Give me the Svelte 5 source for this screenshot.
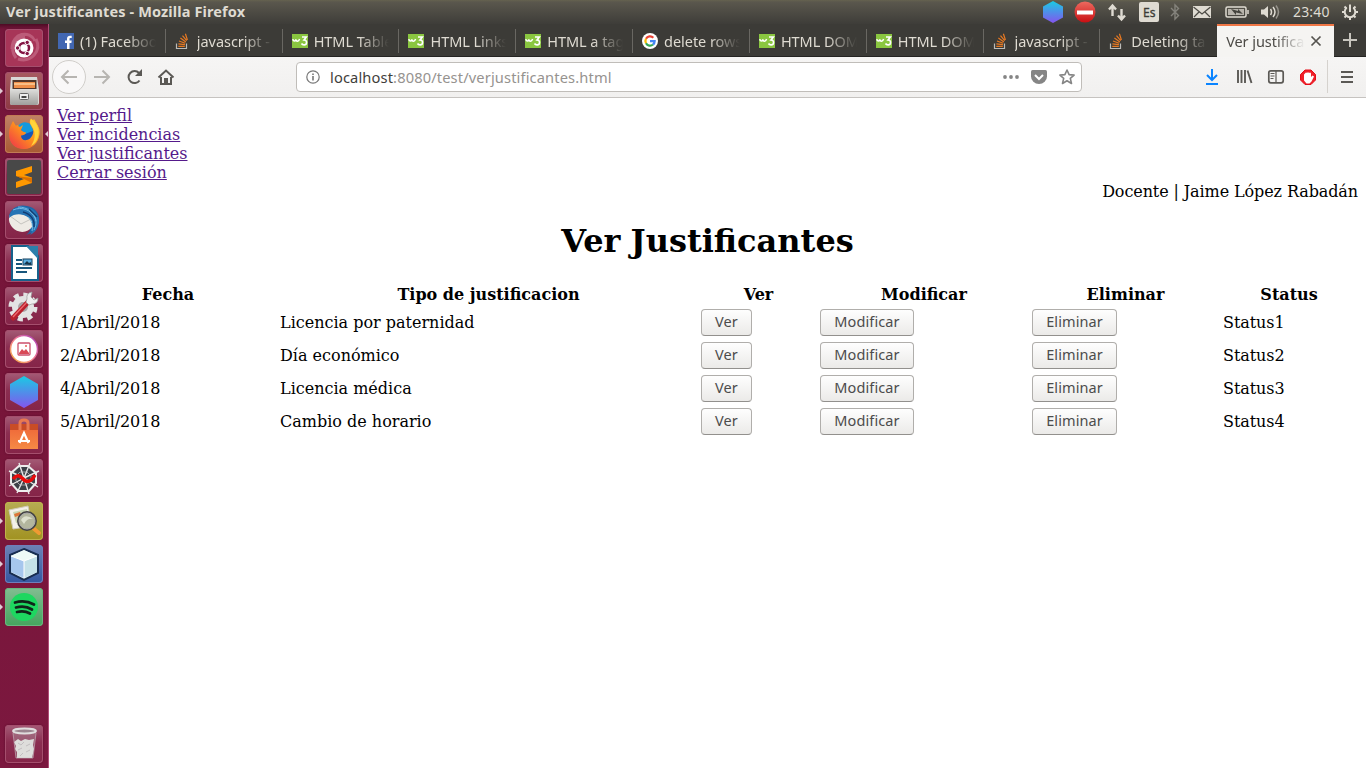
<script>
  const tabs = [
    { icon: 'fb', title: '(1) Facebook' },
    { icon: 'so', title: 'javascript - row' },
    { icon: 'w3', title: 'HTML Tables' },
    { icon: 'w3', title: 'HTML Links' },
    { icon: 'w3', title: 'HTML a tags' },
    { icon: 'google', title: 'delete rows' },
    { icon: 'w3', title: 'HTML DOM' },
    { icon: 'w3', title: 'HTML DOM' },
    { icon: 'so', title: 'javascript - row' },
    { icon: 'so', title: 'Deleting table' }
  ];
  const apps = [
    { id: 'dash' },
    { id: 'files', open: true },
    { id: 'firefox', open: true, focused: true },
    { id: 'sublime' },
    { id: 'thunderbird' },
    { id: 'writer' },
    { id: 'settings' },
    { id: 'gallery' },
    { id: 'hex' },
    { id: 'software' },
    { id: 'spider' },
    { id: 'viewer', open: true },
    { id: 'netbeans', open: true },
    { id: 'spotify', open: true }
  ];
  const links = ['Ver perfil', 'Ver incidencias', 'Ver justificantes', 'Cerrar sesión'];
  const heads = ['Fecha', 'Tipo de justificacion', 'Ver', 'Modificar', 'Eliminar', 'Status'];
  const rows = [
    ['1/Abril/2018', 'Licencia por paternidad', 'Status1'],
    ['2/Abril/2018', 'Día económico', 'Status2'],
    ['4/Abril/2018', 'Licencia médica', 'Status3'],
    ['5/Abril/2018', 'Cambio de horario', 'Status4']
  ];
</script>

{#snippet favicon(kind)}
  <svg class="fav" width="16" height="16" viewBox="0 0 16 16">
    {#if kind === 'fb'}
      <rect width="16" height="16" fill="#4267b2" />
      <path d="M9 16V10H7V7.500h2V6c0-2.200 1.200-3.300 3.100-3.300h1.600V5h-1.200c-.8 0-1 .4-1 1v1.500h2.200L13.400 10h-1.900v6z" fill="#fff" />
    {:else if kind === 'so'}
      <path d="M1.500 10.500v5h10v-5" fill="none" stroke="#bcbbb8" stroke-width="1.200" />
      <path d="M3.300 13.300h6.500M3.400 10.800l6.500.9M4 8l6.200 2.300M5.400 5.100l5.500 3.800M7.500 2.600l4.200 5M10.400.7l2 6.300" stroke="#e87922" stroke-width="1.200" />
    {:else if kind === 'w3'}
      <rect y="1" width="16" height="14" fill="#8ac640" />
      <path d="M.9 6c.1 2.600 2.400 2.600 2.900.5.400 2.300 2.800 2.400 3.800-.5" fill="none" stroke="#fff" stroke-width="1.500" /><path d="M10 4h4.300L12 6.900c3.600.1 3.200 5.100 0 5-1.200 0-2-.5-2.500-1.400" fill="none" stroke="#fff" stroke-width="1.600" />
    {:else}
      <circle cx="8" cy="8" r="8" fill="#fff" />
      <g fill="none" stroke-width="2.300">
        <path d="M4 5.800A4.600 4.600 0 0 1 11.300 4.800" stroke="#ea4335" />
        <path d="M4 5.800A4.600 4.600 0 0 0 4 10.300" stroke="#fbbc05" />
        <path d="M4 10.300A4.600 4.600 0 0 0 11 11.500" stroke="#34a853" />
        <path d="M8 8.200h4.600c0 1.400-.6 2.500-1.600 3.300" stroke="#4285f4" />
      </g>
    {/if}
  </svg>
{/snippet}

{#snippet appIcon(id)}
  <svg width="38" height="38" viewBox="0 0 38 38">
    {#if id === 'dash'}
      <path d="M7 20C7 3 25 1 30 12M31 10c6 12-5 24-18 20M11 29C4 20 9 8 20 8" fill="none" stroke="#d68aa2" stroke-width="3" opacity=".45" />
      <circle cx="19" cy="19" r="9.500" fill="#fff" />
      <circle cx="19" cy="19" r="5" fill="none" stroke="#831343" stroke-width="2.500" />
      <g fill="#831343" stroke="#fff" stroke-width="1"><circle cx="12.600" cy="19" r="2.200" /><circle cx="22.200" cy="13.400" r="2.200" /><circle cx="22.200" cy="24.600" r="2.200" /></g>
    {:else if id === 'files'}
      <path d="M6 5h26l2 13v13q0 2-2 2H7q-2 0-2-2V18z" fill="#d9d9d7" />
      <rect x="7.500" y="8" width="24" height="9" fill="#53382b" />
      <path d="M9 10h21v6H9z" fill="#ee8f49" /><path d="M9 12h21" stroke="#ffd9a8" stroke-width="1.300" />
      <path d="M5 17h28v14q0 2-2 2H7q-2 0-2-2z" fill="url(#metal)" />
      <rect x="14.500" y="21.500" width="9" height="6" rx="1" fill="#eee" stroke="#666" /><path d="M16.500 24h5v2h-5z" fill="#444" />
    {:else if id === 'firefox'}
      <path d="M8 6l3 5c3-2 8-1 13 0l5-7c4 6 5 10 5 15 0 8-6 15-15 15S4 28 4 19c0-6 2-9 4-13z" fill="url(#fox)" />
      <circle cx="20" cy="18" r="9.500" fill="#1757b8" />
      <path d="M13 11q6-7 14-1l1 6-8 3z" fill="#1499df" />
      <path d="M6 14c3-4 6-4 9-2l3-2-2 5q2 2 5 2.500c0 2-3 3-5 3 0 5 5 6 9 3 4-4 4-8 2-11-1-3-4-5-1-9 8 6 10 12 8 18-2 8-9 12-16 12C8 33 2 25 6 14z" fill="url(#fox)" />
      <path d="M26 4c7 5 9 12 7 18-1 4-3 7-7 9 4-6 5-12 2-18-2-4-4-5-2-9z" fill="#ffd43c" />
    {:else if id === 'sublime'}
      <rect x="2" y="2" width="34" height="34" rx="2" fill="#484848" />
      <path d="M11 13l16-5v6l-8 3 8 2.500V25l-16 5v-6l8-3-8-3z" fill="#ff9800" />
      <path d="M11 18l16 2v5l-8-4z" fill="#db7000" />
    {:else if id === 'thunderbird'}
      <path d="M4 15C6 6 15 3 22 5c8 1 13 8 12 15-1 7-6 12-13 14 3-2 4-4 4-6l-15-8z" fill="#1c66a8" />
      <path d="M5 14c7-3 15 0 22 3v9c-4 6-14 7-20 0-3-4-4-8-2-12z" fill="#eeebe5" />
      <path d="M5 15l11 8 10-5" fill="none" stroke="#c5c4bf" />
      <path d="M4 17C5 8 14 2 24 7c8 2 12 11 9 18-1 4-4 7-8 9 4-6 4-12 0-16-5-5-14-7-21-1z" fill="#2674b5" />
      <path d="M8 9c9-4 18 0 22 8 2 4 1 8-1 12M13 6c9 0 17 5 18 14M23 16q6 6 4 14" stroke="#70b9e4" stroke-width="1" fill="none" />
      <path d="M18 11c8 2 12 8 11 15M24 8l8 8" stroke="#123b70" stroke-width="1.400" fill="none" />
    {:else if id === 'writer'}
      <path d="M7 2h16l10 10v24H7z" fill="#fff" stroke="#16618c" stroke-width="2" />
      <path d="M21 2h12v13z" fill="#2c7fac" />
      <path d="M11 16h6M11 20h6M11 24h16M11 28h11" stroke="#18567c" stroke-width="2" />
      <rect x="18" y="15" width="9" height="6" fill="#5baee1" stroke="#153e5c" /><path d="M19 20l3-3 2 2 2-1v3z" fill="#173449" />
    {:else if id === 'settings'}
      <circle cx="18" cy="20" r="11" fill="#e3e3e3" />
      <circle cx="18" cy="20" r="12" fill="none" stroke="#e3e3e3" stroke-width="5" stroke-dasharray="5 4.420" />
      <circle cx="18" cy="20" r="5" fill="#aaa4a7" />
      <path d="M8 31L24 14" stroke="#b9202c" stroke-width="5" stroke-linecap="round" /><path d="M8 30L23 14" stroke="#ee6970" stroke-width="1.300" />
      <path d="M22 12q-1-6 5-7l-1 5 3 3 4-2q0 6-6 6l-3 1-3-3z" fill="#eee" stroke="#999" stroke-width=".7" />
    {:else if id === 'gallery'}
      <circle cx="19" cy="19" r="13.500" fill="#fff" stroke="url(#rainbow)" stroke-width="1.500" />
      <rect x="13" y="13" width="12" height="12" rx="1" fill="none" stroke="#cb506c" stroke-width="1.300" />
      <path d="M14 23l3-4 2 2 2-2 3 4v1H14z" fill="#d84956" /><circle cx="21" cy="16" r="1" fill="#e96155" />
    {:else if id === 'hex'}
      <path d="M19 3l14 8v16l-14 8-14-8V11z" fill="url(#hexg)" />
    {:else if id === 'software'}
      <path d="M5 11h28v22H5z" fill="url(#orange)" /><path d="M5 8h28v6H5z" fill="#c94c26" />
      <path d="M15 14V7q0-3 4-3t4 3v7" fill="none" stroke="#ea7950" stroke-width="3" />
      <path d="M14.500 27l4.500-10 4.500 10M13 25h12" fill="none" stroke="#fff" stroke-width="2.200" />
    {:else if id === 'spider'}
      <path d="M14 7l9 0 8 7 0 10-7 8H13l-7-8V14z" fill="#3c4148" stroke="#eee" stroke-width="2" />
      <path d="M19 19L14 4M19 19L25 4M19 19L34 12M19 19L33 28M19 19L24 35M19 19L12 34M19 19L4 27M19 19L4 12" fill="none" stroke="#e9e9e9" stroke-width="1.400" />
      <path d="M15 13h7l4 4v5l-5 4h-6l-4-4v-5z" fill="none" stroke="#c4c5c7" stroke-width=".7" />
      <path d="M8 20q5-6 9-1 7 8 13-3" fill="none" stroke="#e80b0b" stroke-width="3.500" />
    {:else if id === 'viewer'}
      <path d="M4 8l19-4 4 20-19 3z" fill="#f3f1e9" stroke="#d0cbb8" /><path d="M8 10l14-3 2 11-13 3z" fill="#cbd7b3" /><path d="M9 12l6-2 1 3-6 2zM15 18l8-3v3l-8 2z" fill="#dd7538" />
      <path d="M28 26l6 5" stroke="#f09a32" stroke-width="4" stroke-linecap="round" /><circle cx="22" cy="19" r="9" fill="#b3b69e" stroke="#444" stroke-width="2" /><circle cx="22" cy="19" r="8" fill="none" stroke="#aaa" /><path d="M16 18q4-7 12-1-6-1-9 5z" fill="#e9ecda" opacity=".8" />
    {:else if id === 'netbeans'}
      <path d="M19 4l14 6v18l-14 7L5 28V10z" fill="#dcecf3" stroke="#182d51" stroke-width="2" />
      <path d="M19 5l13 6-13 5-13-5z" fill="#eefaf7" /><path d="M6 11l13 5v17L6 27z" fill="#a6c6ed" /><path d="M19 16l13-5v16l-13 6z" fill="#c5e1e8" /><path d="M6 11l13 5 13-5M19 16v17" fill="none" stroke="#fff" />
    {:else if id === 'spotify'}
      <circle cx="19" cy="19" r="14" fill="#1ed760" />
      <path d="M10 14.500q10-3 19 2M11 19.500q9-2.500 16 2M12 24q7-2 13 1.500" fill="none" stroke="#10251a" stroke-width="2.700" stroke-linecap="round" />
    {:else}
      <path d="M8 7h23l-3 26H11z" fill="#b2a3aa" opacity=".35" />
      <path d="M9 17l4-3 3 2 4-2 4 1 5-1-1 6 1 4-2 9H12l0-6-2-3 1-3z" fill="#dedddb" /><path d="M13 18l3 2 3-3M21 21l4-2M13 25l4-2M21 27l4-2M15 31l3-3" stroke="#c2bec0" fill="none" />
      <ellipse cx="19.500" cy="6" rx="11.500" ry="2.400" fill="#9b858f" stroke="#e0dede" stroke-width="2" /><path d="M8 8l3 25h17l3-25" fill="none" stroke="#c9c0c4" opacity=".6" />
    {/if}
  </svg>
{/snippet}

<svg class="defs" width="0" height="0">
  <defs>
    <linearGradient id="metal" x2="0" y2="1"><stop stop-color="#dededc" /><stop offset="1" stop-color="#9f9f9c" /></linearGradient>
    <linearGradient id="fox" x1="1" x2="0" y2="1"><stop stop-color="#ffd62c" /><stop offset=".45" stop-color="#ff961b" /><stop offset="1" stop-color="#ef314d" /></linearGradient>
    <linearGradient id="hexg" x2="0" y2="1"><stop stop-color="#19cbe4" /><stop offset="1" stop-color="#8454ee" /></linearGradient>
    <linearGradient id="orange" x2="0" y2="1"><stop stop-color="#ef6839" /><stop offset="1" stop-color="#f58a45" /></linearGradient>
    <linearGradient id="rainbow" x1="0" y1="1" x2="1" y2="0"><stop stop-color="#f5b33d" /><stop offset=".5" stop-color="#f37b92" /><stop offset="1" stop-color="#a43bbb" /></linearGradient>
    <linearGradient id="redg" x2="0" y2="1"><stop stop-color="#ed6a5f" /><stop offset="1" stop-color="#c90e12" /></linearGradient>
  </defs>
</svg>

<div class="desktop">
  <header class="panel">
    <span class="wintitle">Ver justificantes - Mozilla Firefox</span>
    <svg class="tray" width="336" height="24" viewBox="1030 0 336 24">
      <path d="M1053 1l10 5.500v11L1053 23l-10-5.500v-11z" fill="url(#hexg)" />
      <circle cx="1085" cy="12" r="10.500" fill="url(#redg)" /><path d="M1077 10.500h16v4h-16z" fill="#fff" />
      <path d="M1112.500 16V7M1109 9.500l3.500-4 3.500 4M1121.500 9v10M1118 15.500l3.500 4 3.500-4" fill="none" stroke="#dfdbd2" stroke-width="2.400" />
      <rect x="1139" y="2" width="20" height="20" rx="2" fill="#dfdbd2" />
      <path d="M1171 8l7.500 7.500-3.500 3.500v-14l3.500 3.500-7.500 7.500" fill="none" stroke="#85837c" stroke-width="1.400" />
      <rect x="1193" y="6" width="18" height="12" fill="#dfdbd2" /><path d="M1193.500 7l8.500 7 8.500-7M1194 17l5-5M1210 17l-5-5" fill="none" stroke="#4c4a44" stroke-width="1.200" />
      <rect x="1226" y="7" width="20" height="10" rx="1.500" fill="none" stroke="#dfdbd2" stroke-width="1.500" /><path d="M1228 9h16v6h-16zM1247 10h2v4h-2z" fill="#b8b4ac" /><path d="M1231 9l7 2 0-2 5 5-7-1.500V15z" fill="#45443e" />
      <path d="M1261 9.500h3l4-3.500v12l-4-3.500h-3z" fill="#dfdbd2" /><path d="M1270.500 9q2 3 0 6M1273 7q4 5 0 10" fill="none" stroke="#dfdbd2" stroke-width="1.500" /><path d="M1276 5.500q5 6.500 0 13" fill="none" stroke="#96938b" stroke-width="1.500" />
      <path d="M1346.700 7.800a5.300 5.300 0 1 0 6.600 0" fill="none" stroke="#dfdbd2" stroke-width="2" /><path d="M1350 4.500v7.500M1342 12h3M1355 12h3M1344.500 6.500l2 2M1355.500 6.500l-2 2M1344.500 17.500l2-2M1355.500 17.500l-2-2M1350 17v3" stroke="#dfdbd2" stroke-width="2" />
      <text class="lang" x="1143" y="17" textLength="12.500" lengthAdjust="spacingAndGlyphs">Es</text>
      <text class="clock" x="1293" y="17" textLength="36.500">23:40</text>
    </svg>
  </header>

  <div class="body">
    <aside class="launcher">
      {#each apps as app}
        <div class="tile {app.id}" class:open={app.open} class:focused={app.focused}>{@render appIcon(app.id)}</div>
      {/each}
      <div class="tile trash">{@render appIcon('trash')}</div>
    </aside>

    <main class="browser">
      <nav class="tabs">
        {#each tabs as tab}
          <div class="tab">{@render favicon(tab.icon)}<span>{tab.title}</span></div>
        {/each}
        <div class="tab active"><span>Ver justificantes</span><svg width="12" height="12" viewBox="0 0 12 12"><path d="M1.500 1.500l9 9m0-9l-9 9" stroke="#55534f" stroke-width="1.700" /></svg></div>
        <div class="plus"><svg width="14" height="14" viewBox="0 0 14 14"><path d="M7 0v14M0 7h14" stroke="#c8c5be" stroke-width="2" /></svg></div>
      </nav>

      <div class="toolbar">
        <svg width="140" height="40" viewBox="49 57 140 40" fill="none">
          <circle cx="69" cy="77" r="16.500" fill="#f9f8f8" stroke="#d0ceca" />
          <path d="M77 77H62m6.500-6.500L62 77l6.500 6.500M94 77h15m-6.500-6.500L109 77l-6.500 6.500" stroke="#b7b5b1" stroke-width="2" />
          <path d="M139.500 80.500a6 6 0 1 1-.5-7.500" stroke="#5b5955" stroke-width="2" /><path d="M142 69v7h-7z" fill="#5b5955" />
          <path d="M158.500 77.500l7.500-7 7.500 7M161 77v7h10v-7" stroke="#5b5955" stroke-width="2" /><path d="M164 83v-5h4v5z" fill="#5b5955" />
        </svg>
        <div class="address">
          <svg class="info" width="14" height="14" viewBox="0 0 14 14"><circle cx="7" cy="7" r="6.200" fill="none" stroke="#777" stroke-width="1.200" /><path d="M7 6v4.500M7 3.500v1.600" stroke="#777" stroke-width="1.600" /></svg>
          <span class="url"><b>localhost</b>:8080/test/verjustificantes.html</span>
          <svg class="acts" width="76" height="20" viewBox="1001 67 76 20">
            <g fill="#858585"><circle cx="1005" cy="77" r="1.900" /><circle cx="1011" cy="77" r="1.900" /><circle cx="1017" cy="77" r="1.900" /></g>
            <path d="M1032.500 70h13q1.500 0 1.500 1.500v5a8 7.500 0 0 1-16 0v-5q0-1.500 1.500-1.500z" fill="#858585" /><path d="M1035 75l4 4 4-4" fill="none" stroke="#fff" stroke-width="2" />
            <path d="M1067 70l2.100 4.600 5 .5-3.800 3.300 1.200 5.100-4.500-2.700-4.500 2.700 1.200-5.100-3.800-3.300 5-.5z" fill="none" stroke="#858585" stroke-width="1.600" stroke-linejoin="round" />
          </svg>
        </div>
        <svg class="tools" width="166" height="40" viewBox="1200 57 166 40" fill="none" stroke="#5b5955">
          <path d="M1212 69v11m-5-5l5 5 5-5M1206 84h12" stroke="#0a84ff" stroke-width="2" />
          <path d="M1238 70v13M1241.500 70v13M1245 70v13M1247.500 70.500l4 12.500" stroke-width="1.900" />
          <rect x="1268.800" y="70.800" width="14.400" height="12" rx="2" stroke-width="1.700" /><path d="M1276 71v12M1270.500 73.500h4M1270.500 76h4M1270.500 78.500h3" stroke-width="1.200" />
          <path d="M1305 70h6l4.500 4.500v5.500l-4.500 4.500h-6l-4.500-4.500v-5.500z" fill="#ef2029" stroke="#e50c18" stroke-width="1" />
          <path d="M1305 73.500q1-1.500 2-.5 1-1.500 2 0 1.500-1 2 .5v3.500l1.500-1.500 1.500 1-2.500 5-2 2h-3l-2.500-3v-6z" fill="#fff" stroke="none" />
          <path d="M1327.500 60v33" stroke="#d5d2ce" /><path d="M1341 72h12M1341 77h12M1341 82h12" stroke-width="2" />
        </svg>
      </div>

      <section class="page">
        <div class="links">{#each links as link}<a href="#top">{link}</a>{/each}</div>
        <div class="user">Docente | Jaime López Rabadán</div>
        <h1>Ver Justificantes</h1>
        <table>
          <colgroup><col class="c1" /><col class="c2" /><col class="c3" /><col class="c4" /><col class="c5" /><col class="c6" /></colgroup>
          <thead><tr>{#each heads as head}<th>{head}</th>{/each}</tr></thead>
          <tbody>
            {#each rows as row}
              <tr>
                <td class="tight">{row[0]}</td><td>{row[1]}</td>
                <td><button class="b1">Ver</button></td>
                <td><button class="b2">Modificar</button></td>
                <td><button class="b3">Eliminar</button></td>
                <td class="tight">{row[2]}</td>
              </tr>
            {/each}
          </tbody>
        </table>
      </section>
    </main>
  </div>
</div>

<style>
  :global(body) { margin: 0; overflow: hidden; background: #fff; }
  * { box-sizing: border-box; }
  svg { display: block; flex: none; }
  .defs { position: absolute; }
  .desktop { width: 1366px; height: 768px; display: flex; flex-direction: column; font: 14.670px "Noto Sans", sans-serif; }
  .panel { height: 24px; flex: none; display: flex; justify-content: space-between; align-items: center; padding-left: 6px; background: linear-gradient(#65624f 0, #5a574d 2px, #3e3d39 24px); color: #dfdbd2; }
  .wintitle { font-weight: 700; font-size: 14.500px; letter-spacing: .13px; line-height: 22px; height: 24px; white-space: nowrap; }
  .lang { font-size: 13px; fill: #3c3b37; stroke: #3c3b37; stroke-width: .3; }
  .clock { font-size: 14px; fill: #dfdbd2; }
  .body { flex: 1; display: flex; min-height: 0; }
  .launcher { width: 49px; flex: none; display: flex; flex-direction: column; gap: 5px; padding: 5px 0 5px 5px; border-right: 1px solid #b04d77; background: linear-gradient(#4d0b24 0, #75163b 5px, #771539 50%, #7c183f 100%); }
  .tile { position: relative; width: 38px; height: 38px; flex: none; border-radius: 4px; background: linear-gradient(#a45b76, #8b2e51 45%, #852448); box-shadow: inset 0 0 0 1px #a54e6d, 0 0 2px #540c2a; }
  .dash { background: #a73558; }
  .files { background: linear-gradient(#a75b61, #8d3944); }
  .firefox { background: linear-gradient(#c08267, #a85a33); box-shadow: inset 0 0 0 1px #c27b54; }
  .viewer { background: linear-gradient(#b6ac53, #a19221); box-shadow: inset 0 0 0 1px #bfb34d; }
  .netbeans { background: linear-gradient(#6d82b4, #3457a0); box-shadow: inset 0 0 0 1px #6f7fbb; }
  .spotify { background: linear-gradient(#82bd91, #45a45e); box-shadow: inset 0 0 0 1px #6ab77f; }
  .trash { margin-top: auto; }
  .open::before { content: ""; position: absolute; left: -5px; top: 16px; border: 3.500px solid transparent; border-left-color: #e0cbd4; border-right: 0; }
  .focused::after { content: ""; position: absolute; left: 40px; top: 16px; border: 3.500px solid transparent; border-right-color: #e0cbd4; border-left: 0; }
  .browser { flex: 1; min-width: 0; display: flex; flex-direction: column; background: #fff; }
  .tabs { height: 33px; flex: none; display: flex; background: #3c3b37; border-bottom: 1px solid #252422; }
  .tab { position: relative; width: 116.820px; flex: none; display: flex; align-items: center; gap: 6px; padding: 1px 10px 0 9px; color: #dfdbd2; }
  .tab::after { content: ""; position: absolute; right: 0; top: 5px; width: 1px; height: 24px; background: #696762; }
  .tab:nth-child(10)::after { display: none; }
  .tab span { flex: 1; min-width: 0; overflow: hidden; white-space: nowrap; font-size: 14.500px; letter-spacing: -.05px; line-height: 24px; -webkit-mask-image: linear-gradient(90deg, #000 calc(100% - 30px), transparent); mask-image: linear-gradient(90deg, #000 calc(100% - 30px), transparent); }
  .active { height: 33px; border-top: 2px solid #f07746; background: #f5f4f2; color: #4c4a46; gap: 5px; padding: 0 12px 2px 9px; }
  .tab.active span { letter-spacing: -.05px; }
  .active::after { display: none; }
  .plus { flex: 1; display: grid; place-items: center; }
  .toolbar { height: 41px; flex: none; display: flex; align-items: flex-start; background: linear-gradient(#f6f5f4, #f1f0ef); border-bottom: 1px solid #c6c3c0; }
  .address { width: 786px; height: 30px; margin: 5px 0 0 107px; display: flex; align-items: center; background: #fff; border: 1px solid #c0bdb9; border-radius: 4px; padding: 0 4px 0 9px; }
  .url { margin-left: 10px; line-height: 24px; color: #96938f; letter-spacing: .13px; }
  .url b { color: #3f3e3b; font-weight: 400; }
  .acts { margin-left: auto; }
  .tools { margin-left: auto; }
  .page { flex: 1; padding: 8px; color: #000; font: 16px/19px "DejaVu Serif", serif; }
  .links { display: flex; flex-direction: column; align-items: flex-start; }
  .links a { color: #551a8b; text-decoration: underline; word-spacing: -.4px; }
  .user { text-align: right; letter-spacing: -.1px; }
  h1 { font-size: 32px; line-height: 38px; margin: 21px 0 22px; text-align: center; word-spacing: -1px; }
  table { width: 1301px; table-layout: fixed; border-collapse: separate; border-spacing: 2px; }
  th, td { padding: 1px; }
  th { height: 21px; text-align: center; }
  td { height: 31px; text-align: left; vertical-align: middle; }
  .tight { letter-spacing: -.08px; }
  .c1 { width: 218px; } .c2 { width: 419px; } .c3 { width: 117px; } .c4 { width: 210px; } .c5 { width: 189px; }
  button { display: block; height: 27px; padding: 0 0 2px; border: 1px solid #b0aeab; border-bottom-color: #92908d; border-radius: 4px; background: linear-gradient(#fefefe, #ebeae8); color: #4c4c4c; font: 14.500px/23px "Noto Sans", sans-serif; letter-spacing: .1px; }
  .b1 { width: 51px; } .b2 { width: 94px; } .b3 { width: 85px; }
</style>
